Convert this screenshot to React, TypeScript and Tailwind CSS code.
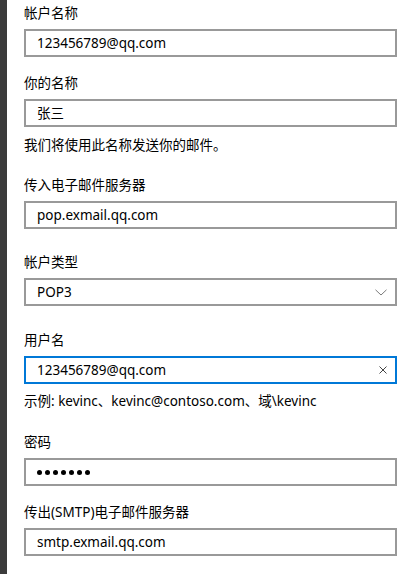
import { ReactNode } from 'react';

const font = { fontFamily: '"Noto Sans", "Noto Sans CJK SC", sans-serif' };

function Label({ children, className = '' }: { children: ReactNode; className?: string }) {
  return <div className={`text-[13.5px] leading-5 text-black mb-[6px] ${className}`}>{children}</div>;
}

function TextBox({ value, focused = false, trailing }: { value: ReactNode; focused?: boolean; trailing?: ReactNode }) {
  return (
    <div
      className={`h-[28px] border-2 flex items-center pl-[11px] pr-[8px] bg-white ${
        focused ? 'border-[#0078d7]' : 'border-[#999999]'
      }`}
    >
      <div className="flex-1 text-[13.5px] leading-5 text-black truncate">{value}</div>
      {trailing}
    </div>
  );
}

function Chevron() {
  return (
    <svg width="12" height="7" viewBox="0 0 12 7" fill="none" stroke="#7a7a7a" strokeWidth="1">
      <path d="M0.5 0.8 L6 6 L11.5 0.8" />
    </svg>
  );
}

function Clear() {
  return (
    <svg width="8" height="8" viewBox="0 0 8 8" fill="none" stroke="#444" strokeWidth="1">
      <path d="M0.5 0.5 L7.5 7.5 M7.5 0.5 L0.5 7.5" />
    </svg>
  );
}

function Dots() {
  return (
    <div className="flex items-center gap-[3px]">
      {Array.from({ length: 7 }).map((_, i) => (
        <span key={i} className="w-[5px] h-[5px] rounded-full bg-black" />
      ))}
    </div>
  );
}

export default function App() {
  return (
    <div className="w-[415px] h-[574px] flex bg-white overflow-hidden" style={font}>
      {/* dimmed window edge on the left */}
      <div className="w-[7px] shrink-0 bg-[#3b3b3b]" />

      {/* account settings form */}
      <div className="flex-1 pl-[17px] pr-[18px] pt-[3px]">
        <Label>帐户名称</Label>
        <TextBox value="123456789@qq.com" />

        <Label className="mt-[16px]">你的名称</Label>
        <TextBox value="张三" />
        <div className="mt-[8px] text-[13.5px] leading-5 text-black">我们将使用此名称发送你的邮件。</div>

        <Label className="mt-[20px]">传入电子邮件服务器</Label>
        <TextBox value="pop.exmail.qq.com" />

        <Label className="mt-[23px]">帐户类型</Label>
        <TextBox value="POP3" trailing={<Chevron />} />

        <Label className="mt-[24px]">用户名</Label>
        <TextBox value="123456789@qq.com" focused trailing={<Clear />} />
        <div className="mt-[7px] text-[13.5px] leading-5 text-black">示例: kevinc、kevinc@contoso.com、域\kevinc</div>

        <Label className="mt-[21px]">密码</Label>
        <TextBox value={<Dots />} />

        <Label className="mt-[16px]">传出(SMTP)电子邮件服务器</Label>
        <TextBox value="smtp.exmail.qq.com" />
      </div>
    </div>
  );
}
